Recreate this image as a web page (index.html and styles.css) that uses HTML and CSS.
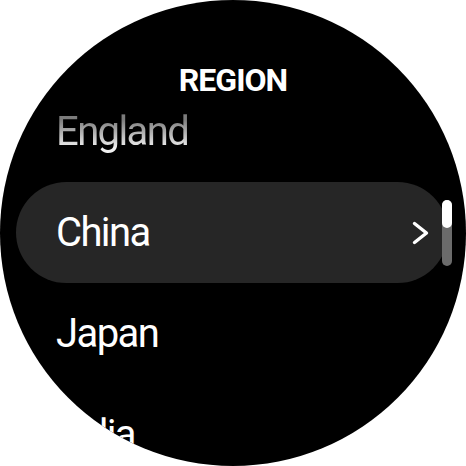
FILE: index.html
```html
<!DOCTYPE html>
<html lang="en">
<head>
  <meta charset="UTF-8" />
  <meta name="viewport" content="width=device-width, initial-scale=1.0"/>
  <title>Region</title>
  <link rel="stylesheet" href="styles.css">
</head>
<body>
  <div class="watch">
    <ul class="list">
      <li class="row faded"><span class="label">England</span></li>
      <li class="row active">
        <span class="label">China</span>
        <svg class="chevron" width="17" height="24" viewBox="0 0 17 24">
          <polyline points="2.5,2.5 14.5,12 2.5,21.5" fill="none" stroke="#fff" stroke-width="3.4" stroke-linecap="round" stroke-linejoin="round"/>
        </svg>
      </li>
      <li class="row"><span class="label">Japan</span></li>
      <li class="row"><span class="label">India</span></li>
    </ul>

    <div class="title">REGION</div>
    <div class="scrollbar"><div class="thumb"></div></div>
  </div>
</body>
</html>
```

FILE: styles.css
```css
:root {
  --pill-color: #262626;
  --track-color: #6b6b6b;
  --text-color: #fff;
}

body {
  margin: 0;
  background: #fff;
  font-family: Roboto, "Liberation Sans", sans-serif;
}

.watch {
  width: 466px;
  height: 466px;
  border-radius: 50%;
  background: #000;
  overflow: hidden;
  position: relative;
  color: var(--text-color);
}

.title {
  position: absolute;
  top: 64px;
  left: 0;
  right: 0;
  text-align: center;
  font-size: 32px;
  line-height: 32px;
  font-weight: 700;
  letter-spacing: -1px;
}

.list {
  list-style: none;
  margin: 0;
  padding: 81px 18px 0 16px;
}

.row {
  height: 101px;
  display: flex;
  align-items: center;
  justify-content: space-between;
  padding: 0 19px 0 40px;
  border-radius: 51px;
  font-size: 40px;
  letter-spacing: -1.6px;
}

.row.active {
  background: var(--pill-color);
}

.row.faded .label {
  background: linear-gradient(to bottom, #7c7c7c 25%, #f0f0f0 85%);
  -webkit-background-clip: text;
  background-clip: text;
  color: transparent;
}

.scrollbar {
  position: absolute;
  left: 442px;
  top: 200px;
  width: 10px;
  height: 66px;
  border-radius: 5px;
  background: var(--track-color);
}

.thumb {
  height: 28px;
  border-radius: 5px;
  background: #fff;
}
```
